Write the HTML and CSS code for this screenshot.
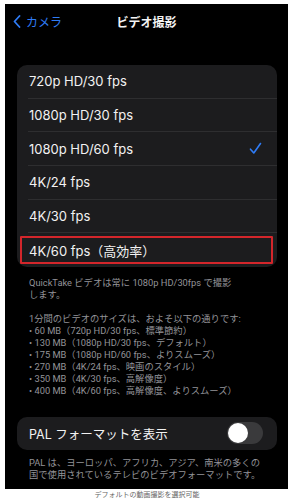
FILE: index.html
```html
<!DOCTYPE html>
<html lang="ja">
<head>
<meta charset="utf-8">
<link rel="stylesheet" href="styles.css">
</head>
<body>
<div class="phone">
  <header class="nav">
    <div class="back">
      <svg class="chev" width="8" height="13" viewBox="0 0 8 13"><path d="M6.5 1 L1.5 6.5 L6.5 12" fill="none" stroke="#2f7cf6" stroke-width="1.8" stroke-linecap="round" stroke-linejoin="round"/></svg>
      <span>カメラ</span>
    </div>
    <div class="title">ビデオ撮影</div>
  </header>

  <div class="card list">
    <div class="row"><span>720p HD/30 fps</span></div>
    <div class="row"><span>1080p HD/30 fps</span></div>
    <div class="row"><span>1080p HD/60 fps</span>
      <svg class="check" width="13" height="13" viewBox="0 0 13 13"><path d="M1.5 7.2 L4.8 11 L11.5 1.5" fill="none" stroke="#2f7cf6" stroke-width="1.6" stroke-linecap="round" stroke-linejoin="round"/></svg>
    </div>
    <div class="row"><span>4K/24 fps</span></div>
    <div class="row"><span>4K/30 fps</span></div>
    <div class="row last"><span>4K/60 fps（高効率）</span><div class="highlight"></div></div>
  </div>

  <div class="note">
    <p>QuickTake ビデオは常に 1080p HD/30fps で撮影<br>します。</p>
    <p class="gap">1分間のビデオのサイズは、およそ以下の通りです:<br>
    • 60 MB（720p HD/30 fps、標準節約）<br>
    • 130 MB（1080p HD/30 fps、デフォルト）<br>
    • 175 MB（1080p HD/60 fps、よりスムーズ）<br>
    • 270 MB（4K/24 fps、映画のスタイル）<br>
    • 350 MB（4K/30 fps、高解像度）<br>
    • 400 MB（4K/60 fps、高解像度、よりスムーズ）</p>
  </div>

  <div class="card pal">
    <span>PAL フォーマットを表示</span>
    <div class="toggle"><div class="knob"></div></div>
  </div>

  <div class="note pal-note">
    <p>PAL は、ヨーロッパ、アフリカ、アジア、南米の多くの<br>国で使用されているテレビのビデオフォーマットです。</p>
  </div>
</div>
<div class="caption">デフォルトの動画撮影を選択可能</div>
</body>
</html>
```
FILE: styles.css
```css
* { box-sizing: border-box; }
html, body { margin: 0; padding: 0; background: #fff; }
body {
  font-family: Inter, "Noto Sans CJK JP", sans-serif;
  width: 294px;
}
.phone {
  margin: 4px 6px 0 5px;
  width: 283px;
  height: 485px;
  background: #000;
  display: flex;
  flex-direction: column;
  overflow: hidden;
}
.nav {
  height: 34px;
  display: flex;
  align-items: center;
  position: relative;
}
.back {
  display: flex;
  align-items: center;
  margin-left: 8px;
  color: #2f7cf6;
  font-size: 12px;
  gap: 5px;
}
.title {
  position: absolute;
  left: 0; right: 0; top: 0; bottom: 0;
  display: flex;
  align-items: center;
  justify-content: center;
  color: #f4f4f4;
  font-size: 12px;
  font-weight: 700;
  pointer-events: none;
}
.card {
  margin: 0 11px 0 12px;
  background: #1c1c1e;
  border-radius: 10px;
}
.list { margin-top: 27px; }
.row {
  position: relative;
  height: 33.67px;
  margin-left: 11px;
  padding-left: 1px;
  padding-right: 15px;
  display: flex;
  align-items: center;
  justify-content: space-between;
  color: #f2f2f2;
  font-size: 13px;
  border-bottom: 1px solid #2e2e30;
}
.row.last { border-bottom: none; }
.highlight {
  position: absolute;
  left: -8px; right: 4px; top: 3px; bottom: 3px;
  border: 2px solid #d3262b;
  border-radius: 1px;
}
.note {
  margin: 10px 12px 0 24px;
  color: #939398;
  font-family: Roboto, "Noto Sans CJK JP", sans-serif;
  font-size: 9.3px;
  line-height: 12px;
}
.note p { margin: 0; }
.note p.gap { margin-top: 12px; }
.pal {
  margin-top: 20px;
  height: 33px;
  display: flex;
  align-items: center;
  justify-content: space-between;
  padding: 0 14px 0 12px;
  color: #f2f2f2;
  font-size: 12.5px;
}
.toggle {
  width: 36px;
  height: 22px;
  border-radius: 11px;
  background: #3a3a3c;
  padding: 1px;
}
.knob {
  width: 20px;
  height: 20px;
  border-radius: 50%;
  background: #fff;
}
.pal-note { margin-top: 7px; }
.caption {
  text-align: center;
  color: #666;
  font-size: 7px;
  margin-top: 1px;
  line-height: 10px;
}
```
